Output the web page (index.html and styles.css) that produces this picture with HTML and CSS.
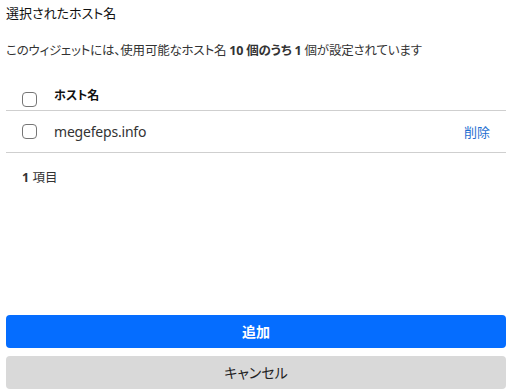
FILE: index.html
```html
<!DOCTYPE html>
<html lang="ja">
<head>
    <meta charset="UTF-8">
    <meta name="viewport" content="width=device-width, initial-scale=1.0">
    <title>選択されたホスト名</title>
    <link rel="stylesheet" href="styles.css">
</head>
<body>
    <div class="page">
        <h1 class="title">選択されたホスト名</h1>
        <p class="desc">このウィジェットには、使用可能なホスト名 <b>10 個のうち 1</b> 個が設定されています</p>

        <div class="table">
            <div class="row head">
                <input type="checkbox" class="check">
                <span class="name">ホスト名</span>
            </div>
            <div class="row">
                <input type="checkbox" class="check">
                <span class="name host">megefeps.info</span>
                <a class="remove" href="#">削除</a>
            </div>
        </div>

        <div class="count"><b>1</b> 項目</div>

        <div class="actions">
            <button class="btn btn-primary">追加</button>
            <button class="btn btn-cancel">キャンセル</button>
        </div>
    </div>
</body>
</html>
```

FILE: styles.css
```css
body {
    margin: 0;
    font-family: "Noto Sans", "Noto Sans CJK JP", sans-serif;
    font-feature-settings: "palt";
    color: #333;
    background-color: #fff;
}

.page {
    display: flex;
    flex-direction: column;
    height: 390px;
    padding: 0 7px 1px 6px;
    box-sizing: border-box;
}

.title {
    margin: 4px 0 0;
    font-size: 13px;
    line-height: 18px;
    font-weight: 400;
    color: #111;
}

.desc {
    margin: 20px 0 0;
    font-size: 12.5px;
    line-height: 18px;
    letter-spacing: -0.2px;
}

.table {
    margin-top: 27px;
}

.row {
    display: flex;
    align-items: center;
    padding: 0 16px;
    border-bottom: 1px solid #cfcfcf;
    height: 41px;
}

.row.head {
    height: 23px;
    align-items: flex-start;
}

.check {
    appearance: none;
    margin: 0 17px 0 0;
    width: 15px;
    height: 15px;
    border: 1px solid #767676;
    border-radius: 4px;
    box-sizing: border-box;
}

.head .check {
    margin-top: 5px;
}

.name {
    font-size: 12px;
    font-weight: 700;
    color: #111;
    line-height: 18px;
}

.name.host {
    font-size: 14px;
    font-weight: 400;
    color: #333;
    letter-spacing: -0.2px;
}

.remove {
    margin-left: auto;
    font-size: 13px;
    color: #1f6fd1;
    text-decoration: none;
}

.count {
    margin: 16px 0 0 16px;
    font-size: 12.5px;
    line-height: 18px;
}

.actions {
    margin-top: auto;
    display: flex;
    flex-direction: column;
    gap: 8px;
}

.btn {
    height: 33px;
    padding: 0 0 2px;
    border: none;
    border-radius: 4px;
    font-family: inherit;
    font-feature-settings: "palt";
    font-size: 14px;
    cursor: pointer;
}

.btn-primary {
    background-color: #056dff;
    color: #fff;
    font-weight: 700;
}

.btn-cancel {
    background-color: #d9d9d9;
    color: #222;
}
```
